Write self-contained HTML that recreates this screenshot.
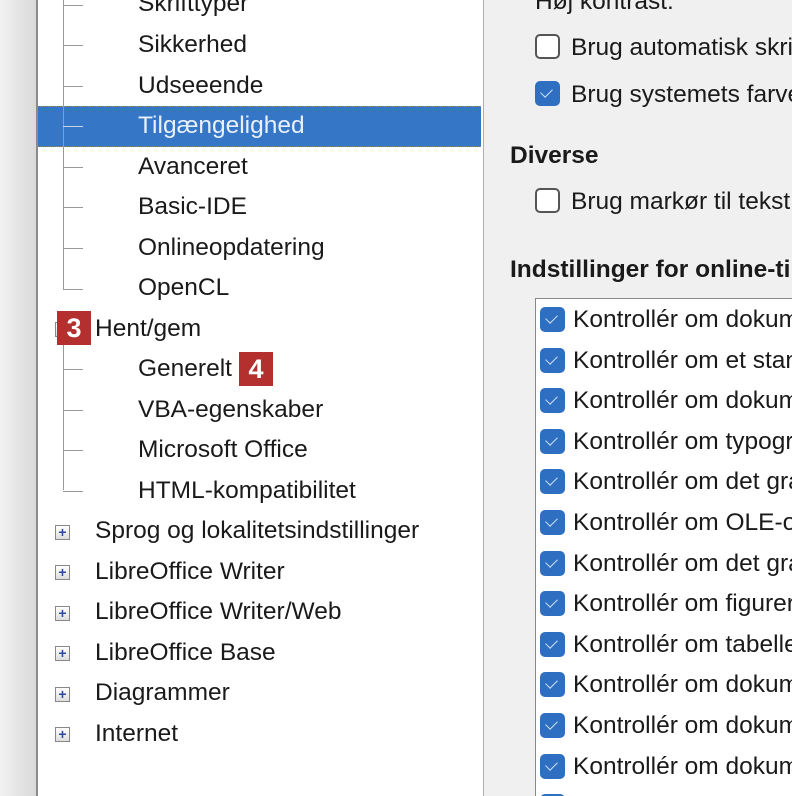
<!DOCTYPE html><html><head><meta charset="utf-8"><style>
html,body{margin:0;width:792px;height:796px;overflow:hidden}
body{position:relative;background:#f0f0f0;font-family:"Liberation Sans",sans-serif;font-size:24.5px;color:#1a1a1a}
.a{position:absolute;white-space:nowrap;line-height:28px}
#strip{position:absolute;left:0;top:0;width:36px;height:796px;background:linear-gradient(90deg,#f2f2f2,#d9d9d9)}
#tree{position:absolute;left:36px;top:0;width:445px;height:796px;background:#fff;border-left:2px solid #8a8a8a;border-right:1px solid #b0b0b0}
.hl{position:absolute;left:38px;top:106px;width:443px;height:39px;background:#3676c6;border-top:1px dotted #888;border-bottom:1px dotted #888}
.v{position:absolute;left:63px;width:1px;background:#999}
.h{position:absolute;left:63px;width:20px;height:1px;background:#999}
.plus{position:absolute;left:55px;width:15px;height:15px;border:1px solid #888;background:linear-gradient(#fff,#ddd);box-sizing:border-box;font-size:14px;line-height:12px;text-align:center;color:#2a4c9a;font-weight:bold}
.badge{position:absolute;background:#b3302f;color:#fff;font-weight:bold;font-size:27px;text-align:center;line-height:34px;width:34px;height:34px}
.cb{position:absolute;width:25px;height:25px;border-radius:5px;box-sizing:border-box}
.off{border:2px solid #555;background:#fff}
.on{background:#2f6fc2}
.on:after{content:"";position:absolute;left:8px;top:5px;width:6px;height:10px;border:solid #cfe0f7;border-width:0 1.5px 1.5px 0;transform:rotate(45deg)}
#clip{position:absolute;left:482px;top:0;width:310px;height:796px;overflow:hidden}
#list{position:absolute;left:53px;top:298px;width:300px;height:520px;background:#fff;border:1px solid #888}
b{font-weight:bold}
</style></head><body>
<div id="strip"></div><div id="tree"></div>
<div class="hl"></div>
<div class="v" style="top:0;height:290px"></div>
<div class="v" style="top:345px;height:145px"></div>
<div class="h" style="top:5px"></div><div class="h" style="top:45px"></div><div class="h" style="top:86px"></div><div class="h" style="top:126px;background:#c8d6ea"></div><div class="h" style="top:167px"></div><div class="h" style="top:207px"></div><div class="h" style="top:248px"></div><div class="h" style="top:289px"></div>
<div class="h" style="top:369px"></div><div class="h" style="top:410px"></div><div class="h" style="top:450px"></div><div class="h" style="top:491px"></div>
<div class="a" style="left:138px;top:-10px">Skrifttyper</div>
<div class="a" style="left:138px;top:31px">Sikkerhed</div>
<div class="a" style="left:138px;top:72px">Udseeende</div>
<div class="a" style="left:138px;top:112px;color:#e8f0fb">Tilgængelighed</div>
<div class="a" style="left:138px;top:153px">Avanceret</div>
<div class="a" style="left:138px;top:193px">Basic-IDE</div>
<div class="a" style="left:138px;top:234px">Onlineopdatering</div>
<div class="a" style="left:138px;top:274px">OpenCL</div>
<div class="plus" style="top:322px"></div>
<div class="badge" style="left:57px;top:311px">3</div>
<div class="a" style="left:95px;top:315px">Hent/gem</div>
<div class="a" style="left:138px;top:355px">Generelt</div>
<div class="badge" style="left:239px;top:352px">4</div>
<div class="a" style="left:138px;top:396px">VBA-egenskaber</div>
<div class="a" style="left:138px;top:436px">Microsoft Office</div>
<div class="a" style="left:138px;top:477px">HTML-kompatibilitet</div>
<div class="plus" style="top:525px">+</div><div class="a" style="left:95px;top:517px">Sprog og lokalitetsindstillinger</div>
<div class="plus" style="top:565px">+</div><div class="a" style="left:95px;top:558px">LibreOffice Writer</div>
<div class="plus" style="top:606px">+</div><div class="a" style="left:95px;top:598px">LibreOffice Writer/Web</div>
<div class="plus" style="top:646px">+</div><div class="a" style="left:95px;top:639px">LibreOffice Base</div>
<div class="plus" style="top:687px">+</div><div class="a" style="left:95px;top:679px">Diagrammer</div>
<div class="plus" style="top:727px">+</div><div class="a" style="left:95px;top:720px">Internet</div>
<div id="clip">
<div class="a" style="left:53px;top:-12px">Høj kontrast:</div>
<div class="cb off" style="left:53px;top:34px"></div><div class="a" style="left:89px;top:34px">Brug automatisk skrifttype</div>
<div class="cb on" style="left:53px;top:81px"></div><div class="a" style="left:89px;top:81px">Brug systemets farver</div>
<div class="a" style="left:28px;top:142px"><b>Diverse</b></div>
<div class="cb off" style="left:53px;top:188px"></div><div class="a" style="left:89px;top:188px">Brug markør til tekst</div>
<div class="a" style="left:28px;top:256px"><b>Indstillinger for online-tilgængelighed</b></div>
<div id="list"></div>
<div id="rows"></div>
</div>
<script>
var t=["dokumentet","et standard","dokumentet","typografi","det grafiske","OLE-objekter","det grafiske","figurer","tabeller","dokumentet","dokumentet","dokumentet","dokumentet"];
var h="";for(var i=0;i<13;i++){var y=307+i*40.6;h+='<div class="cb on" style="left:58px;top:'+y+'px"></div><div class="a" style="left:91px;top:'+(y-1)+'px">Kontrollér om '+t[i]+'</div>';}
document.getElementById("rows").innerHTML=h;
</script>
</body></html>
